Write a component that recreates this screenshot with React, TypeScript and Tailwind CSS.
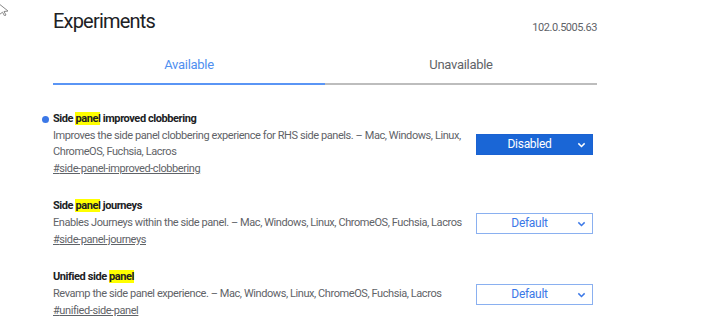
import React from 'react';

type Flag = {
  id: string;
  title: React.ReactNode;
  desc: string;
  value: string;
  changed?: boolean;
};

const Hl = ({ children }: { children: React.ReactNode }) => (
  <span className="bg-[#ffff00]">{children}</span>
);

const flags: Flag[] = [
  {
    id: 'side-panel-improved-clobbering',
    title: (
      <>
        Side <Hl>panel</Hl> improved clobbering
      </>
    ),
    desc: 'Improves the side panel clobbering experience for RHS side panels. – Mac, Windows, Linux, ChromeOS, Fuchsia, Lacros',
    value: 'Disabled',
    changed: true,
  },
  {
    id: 'side-panel-journeys',
    title: (
      <>
        Side <Hl>panel</Hl> journeys
      </>
    ),
    desc: 'Enables Journeys within the side panel. – Mac, Windows, Linux, ChromeOS, Fuchsia, Lacros',
    value: 'Default',
  },
  {
    id: 'unified-side-panel',
    title: (
      <>
        Unified side <Hl>panel</Hl>
      </>
    ),
    desc: 'Revamp the side panel experience. – Mac, Windows, Linux, ChromeOS, Fuchsia, Lacros',
    value: 'Default',
  },
];

function Chevron({ className }: { className: string }) {
  return (
    <svg viewBox="0 0 10 6" className={className} fill="none" stroke="currentColor" strokeWidth="1.6">
      <path d="M1.5 1.2 L5 4.6 L8.5 1.2" />
    </svg>
  );
}

function Select({ value, changed }: { value: string; changed?: boolean }) {
  return (
    <div
      className={
        changed
          ? 'relative mr-[4px] flex h-[21px] w-[117px] items-center justify-center border border-[#1a62d2] bg-[#1a66d6] text-[12px] tracking-[-0.3px] text-white'
          : 'relative mr-[4px] flex h-[21px] w-[117px] items-center justify-center border border-[#8ab0f0] bg-white text-[12px] tracking-[-0.3px] text-[#3b78e7]'
      }
    >
      <span className="pr-[10px]">{value}</span>
      <Chevron className="absolute right-[6px] top-[7px] h-[6px] w-[9px]" />
    </div>
  );
}

export default function App() {
  return (
    <div className="relative h-[333px] w-[701px] overflow-hidden bg-white font-['Roboto',sans-serif]">
      <svg className="absolute left-0 top-[2px] h-[14px] w-[10px]" viewBox="0 0 10 14" fill="white" stroke="#888" strokeWidth="1">
        <path d="M-2 1 L8 9 L4 9.5 L6 13 L4.5 13.8 L2.5 10.2 L-0.5 12.5 Z" />
      </svg>

      <div className="ml-[53px] w-[544px]">
        <div className="flex items-end justify-between pt-[7px]">
          <h1 className="text-[20px] leading-[28px] tracking-[-0.8px] text-[#202124]">Experiments</h1>
          <span className="mb-[-1px] text-[11px] tracking-[-0.45px] text-[#5f6368]">102.0.5005.63</span>
        </div>

        <div className="mt-[20px] flex">
          <div className="flex h-[30px] flex-1 items-start justify-center border-b-2 border-[#5a95f5] text-[13px] tracking-[-0.3px] text-[#4f8ff0]">
            Available
          </div>
          <div className="flex h-[30px] flex-1 items-start justify-center border-b-2 border-[#bdbdbd] text-[13px] tracking-[-0.3px] text-[#5f6368]">
            Unavailable
          </div>
        </div>

        <div className="mt-[26px] flex flex-col gap-[21px] tracking-[-0.42px]">
          {flags.map((f) => (
            <div key={f.id} className="flex items-center justify-between">
              <div className="relative w-[415px]">
                {f.changed && (
                  <span className="absolute left-[-11px] top-[5px] h-[7px] w-[7px] rounded-full bg-[#3b78e7]" />
                )}
                <div className="text-[11px] font-bold leading-[16px] text-[#202124]">{f.title}</div>
                <div className="mt-[1px] text-[11px] leading-[16px] text-[#5f6368]">{f.desc}</div>
                <div className="mt-[1px] text-[11px] leading-[16px] text-[#5f6368] underline">#{f.id}</div>
              </div>
              <Select value={f.value} changed={f.changed} />
            </div>
          ))}
        </div>
      </div>
    </div>
  );
}
